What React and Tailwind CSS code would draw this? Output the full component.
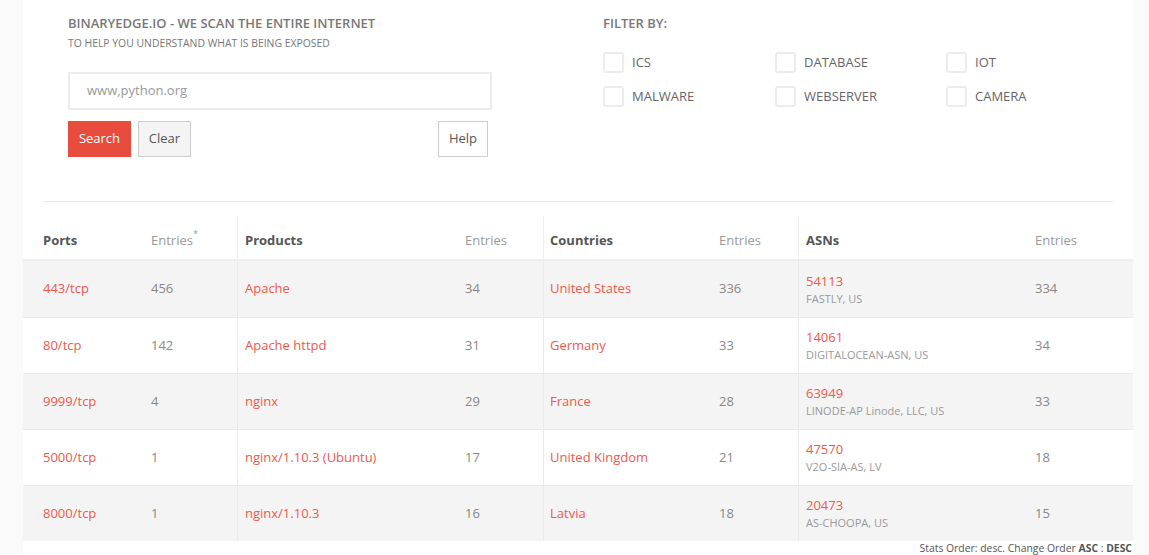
import React from "react";

const rows = [
  { port: "443/tcp", pe: 456, product: "Apache", pre: 34, country: "United States", ce: 336, asn: "54113", asnName: "FASTLY, US", ae: 334 },
  { port: "80/tcp", pe: 142, product: "Apache httpd", pre: 31, country: "Germany", ce: 33, asn: "14061", asnName: "DIGITALOCEAN-ASN, US", ae: 34 },
  { port: "9999/tcp", pe: 4, product: "nginx", pre: 29, country: "France", ce: 28, asn: "63949", asnName: "LINODE-AP Linode, LLC, US", ae: 33 },
  { port: "5000/tcp", pe: 1, product: "nginx/1.10.3 (Ubuntu)", pre: 17, country: "United Kingdom", ce: 21, asn: "47570", asnName: "V2O-SIA-AS, LV", ae: 18 },
  { port: "8000/tcp", pe: 1, product: "nginx/1.10.3", pre: 16, country: "Latvia", ce: 18, asn: "20473", asnName: "AS-CHOOPA, US", ae: 15 },
];

const filters = ["ICS", "DATABASE", "IOT", "MALWARE", "WEBSERVER", "CAMERA"];

function Checkbox({ label }) {
  return (
    <label className="flex items-center gap-[8px] h-[21px]">
      <span className="w-[21px] h-[21px] border-2 border-[#ececec] rounded-[3px] bg-white" />
      <span className="text-[13px] text-[#666] uppercase">{label}</span>
    </label>
  );
}

export default function App() {
  return (
    <div className="min-h-[555px] bg-[#fafafa] font-['Open_Sans',sans-serif]">
      <div className="ml-[23px] w-[1110px] bg-white min-h-[555px]">
        {/* top search + filters */}
        <div className="flex pl-[45px] pt-[14px] h-[201px]">
          <div className="w-[535px]">
            <h1 className="text-[13px] font-semibold text-[#777] leading-[18px]">
              BINARYEDGE.IO - WE SCAN THE ENTIRE INTERNET
            </h1>
            <p className="text-[10.4px] text-[#777] leading-[14px] mt-[4px]">
              TO HELP YOU UNDERSTAND WHAT IS BEING EXPOSED
            </p>
            <div className="mt-[22px] w-[424px] h-[38px] border-2 border-[#ececec] flex items-center pl-[17px]">
              <span className="text-[13px] text-[#999]">www,python.org</span>
            </div>
            <div className="flex items-center mt-[11px] w-[420px]">
              <button className="h-[36px] w-[63px] bg-[#e74c3c] text-white text-[13px]">Search</button>
              <button className="h-[36px] w-[53px] ml-[7px] bg-[#f4f4f4] border border-[#ccc] text-[#555] text-[13px]">Clear</button>
              <button className="h-[36px] w-[50px] ml-auto bg-white border border-[#ccc] text-[#555] text-[13px]">Help</button>
            </div>
          </div>
          <div>
            <h2 className="text-[13px] font-semibold text-[#777] leading-[18px]">FILTER BY:</h2>
            <div className="grid grid-cols-[172px_171px_120px] gap-y-[13px] mt-[20px]">
              {filters.map((f) => (
                <Checkbox key={f} label={f} />
              ))}
            </div>
          </div>
        </div>

        <div className="mx-[20px] border-t border-[#e8e8e8]" />

        {/* stats table */}
        <div className="mt-[14px] grid grid-cols-[128px_86px_228px_78px_176px_79px_237px_98px] text-[13px]">
          <div className="h-[45px] flex items-center pt-[6px] pl-[20px] font-bold text-[#555] border-b-2 border-[#eee]">Ports</div>
          <div className="h-[45px] flex items-center pt-[6px] text-[#999] border-b-2 border-[#eee]">
            Entries<sup className="text-[9px] text-[#6f9fca] -mt-[4px]">*</sup>
          </div>
          <div className="h-[45px] flex items-center pt-[6px] pl-[7px] font-bold text-[#555] border-l border-b-2 border-[#eee]">Products</div>
          <div className="h-[45px] flex items-center pt-[6px] text-[#999] border-b-2 border-[#eee]">Entries</div>
          <div className="h-[45px] flex items-center pt-[6px] pl-[6px] font-bold text-[#555] border-l border-b-2 border-[#eee]">Countries</div>
          <div className="h-[45px] flex items-center pt-[6px] text-[#999] border-b-2 border-[#eee]">Entries</div>
          <div className="h-[45px] flex items-center pt-[6px] pl-[7px] font-bold text-[#555] border-l border-b-2 border-[#eee]">ASNs</div>
          <div className="h-[45px] flex items-center pt-[6px] text-[#999] border-b-2 border-[#eee]">Entries</div>

          {rows.map((r, i) => {
            const bg = i % 2 === 0 ? "bg-[#f4f4f4]" : "bg-white";
            const line = i === 0 ? "" : "border-t border-[#eaeaea]";
            return (
              <React.Fragment key={r.port}>
                <div className={`h-[56px] flex items-center pl-[20px] text-[#f0584b] ${bg} ${line}`}>{r.port}</div>
                <div className={`h-[56px] flex items-center text-[#888] ${bg} ${line}`}>{r.pe}</div>
                <div className={`h-[56px] flex items-center pl-[7px] text-[#f0584b] border-l border-l-[#eaeaea] ${bg} ${line}`}>{r.product}</div>
                <div className={`h-[56px] flex items-center text-[#888] ${bg} ${line}`}>{r.pre}</div>
                <div className={`h-[56px] flex items-center pl-[6px] text-[#f0584b] border-l border-l-[#eaeaea] ${bg} ${line}`}>{r.country}</div>
                <div className={`h-[56px] flex items-center text-[#888] ${bg} ${line}`}>{r.ce}</div>
                <div className={`h-[56px] flex flex-col justify-center pl-[7px] border-l border-l-[#eaeaea] ${bg} ${line}`}>
                  <span className="text-[#f0584b] leading-[18px]">{r.asn}</span>
                  <span className="text-[11px] text-[#999] leading-[17px]">{r.asnName}</span>
                </div>
                <div className={`h-[56px] flex items-center text-[#888] ${bg} ${line}`}>{r.ae}</div>
              </React.Fragment>
            );
          })}
        </div>

        <div className="text-right text-[10.4px] text-[#555] leading-[15px] pr-[1px]">
          Stats Order: desc. Change Order <b>ASC</b> : <b>DESC</b>
        </div>
      </div>
    </div>
  );
}
